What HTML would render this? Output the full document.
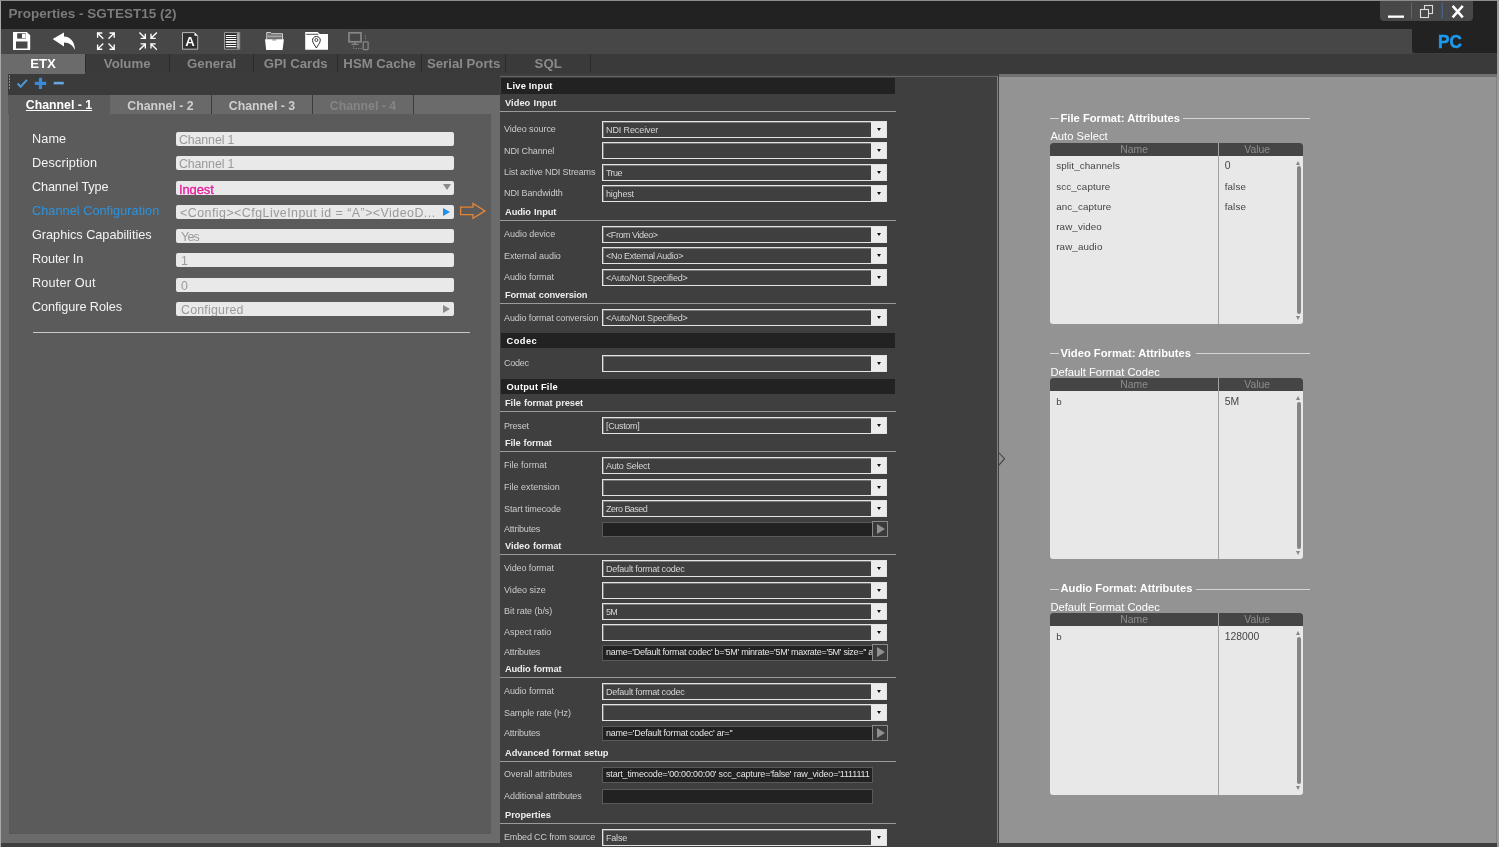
<!DOCTYPE html>
<html>
<head>
<meta charset="utf-8">
<title>Properties - SGTEST15 (2)</title>
<style>
*{box-sizing:border-box;margin:0;padding:0}
html,body{width:1499px;height:847px;overflow:hidden;background:#3e3e3e;font-family:"Liberation Sans",sans-serif;}
#root{will-change:transform;position:relative;width:1499px;height:847px;overflow:hidden;background:#3e3e3e;}
.abs{position:absolute}
.t{position:absolute;white-space:nowrap;line-height:1;}
/* ---------- frame ---------- */
#edgeL{left:0;top:0;width:1px;height:847px;background:#a9a9a9}
#edgeT{left:0;top:0;width:1499px;height:1px;background:#8c8c8c}
#edgeR{left:1496.5px;top:0;width:2.5px;height:847px;background:#9a9a9a}
#titlebar{left:1px;top:1px;width:1496px;height:28px;background:#222}
#title{left:8.5px;top:7px;font-size:13.5px;font-weight:bold;color:#7b7b7b;}
#toolbar{left:1px;top:29px;width:1411px;height:25px;background:#474747}
#pcbox{left:1412px;top:29px;width:85px;height:24px;background:#222;border-bottom-left-radius:4px}
#pc{left:1437.6px;top:31.9px;font-size:19px;font-weight:bold;color:#1b9bf0;transform:scaleX(0.905);transform-origin:0 0;-webkit-text-stroke:0.5px #1b9bf0}
#tabbar{left:1px;top:53.7px;width:1496px;height:20.3px;background:#3a3a3a}
#winbtn{left:1380px;top:1px;width:93px;height:19.6px;background:#484848;border-radius:0 0 4px 4px}
/* ---------- top tabs ---------- */
.tt{position:absolute;top:53px;height:21px;font-size:13.2px;font-weight:bold;color:#8a8a8a;text-align:center;line-height:21px;white-space:nowrap}
.tsep{position:absolute;top:54px;width:1px;height:18px;background:#2b2b2b}
#etx{left:1px;top:53.7px;width:84px;height:20.3px;line-height:20.4px;background:#6b6b6b;color:#fff}
/* ---------- left ---------- */
#etxpage{left:1px;top:74px;width:499px;height:769px;background:#6b6b6b}
#smalltb{left:8px;top:74px;width:492px;height:21.2px;background:#3b3b3b}
#chpanel{left:8.6px;top:95px;width:482.2px;height:739px;background:#5b5b5b;box-shadow:inset 1px -1px 0 #585858}
.ctab{position:absolute;top:95px;height:19px;background:#696969;font-size:12.3px;font-weight:bold;color:#cfcfcf;text-align:center;line-height:22.8px;white-space:nowrap}
.csep{position:absolute;top:95px;width:1px;height:19px;background:#3c3c3c}
.lbl{position:absolute;left:32px;font-size:12.7px;color:#f4f4f4;white-space:nowrap;line-height:16px}
.inp{position:absolute;left:176px;width:278px;height:14px;background:#e9e9e9;border-radius:2px;font-size:12.4px;color:#9a9a9a;line-height:17.4px;padding-left:3px;white-space:nowrap;overflow:hidden}
/* ---------- middle ---------- */
#mid{left:500px;top:74px;width:498px;height:773px;background:#3f3f3f}
.cat{position:absolute;left:501px;width:394px;height:15.8px;background:#222;color:#fff;font-size:9.3px;font-weight:bold;line-height:17.4px;margin-top:0.4px;padding-left:5.6px;white-space:nowrap}
.sec{position:absolute;left:505px;color:#ececec;font-size:9.3px;font-weight:bold;line-height:12px;white-space:nowrap;word-spacing:0.6px}
.ul{position:absolute;left:500px;width:396px;height:1px;background:#9a9a9a}
.pl{position:absolute;left:504px;color:#cbcbcb;font-size:9px;line-height:12px;white-space:nowrap;letter-spacing:-0.12px}
.dd{position:absolute;left:602px;width:285px;height:17px;border:1px solid #e4e4e4;background:#3f3f3f;color:#d6d6d6;font-size:9px;line-height:16.6px;padding-left:3px;white-space:nowrap;overflow:hidden;letter-spacing:-0.22px;box-shadow:inset 1px 1px 0 #777}
.dd:after{content:"";position:absolute;right:0;top:0;width:15px;height:15px;background:#ececec}
.dd:before{content:"";position:absolute;right:5px;top:6px;border-left:2.5px solid transparent;border-right:2.5px solid transparent;border-top:3px solid #111;z-index:2}
.tb{position:absolute;left:602px;width:271px;height:15.5px;border:1px solid #5a5a5a;background:#222;color:#e6e6e6;font-size:9px;line-height:12.6px;padding-left:3px;white-space:nowrap;overflow:hidden;letter-spacing:-0.3px}
.pb{position:absolute;left:871.5px;width:16.3px;height:16.3px;border:1px solid #8a8a8a;background:#3a3a3a}
.pb:after{content:"";position:absolute;left:4.5px;top:2px;border-top:5.2px solid transparent;border-bottom:5.2px solid transparent;border-left:8.5px solid #909090}
/* ---------- right ---------- */
#right{left:998.6px;top:74px;width:498.4px;height:769px;background:#939393}
.gl{position:absolute;height:1px;background:#d4d4d4}
.gt{position:absolute;left:1060.5px;font-size:11.2px;font-weight:bold;color:#fff;white-space:nowrap;line-height:12px}
.gs{position:absolute;left:1050.4px;font-size:11.2px;color:#fff;white-space:nowrap;line-height:12px}
.tbl{position:absolute;left:1050.2px;width:252.8px;height:181.3px;background:#e8e8e8;border-radius:3px;overflow:hidden}
.th{position:absolute;left:0;top:0;width:253px;height:13px;background:#454545}
.thn{position:absolute;top:0;height:13px;line-height:13px;font-size:10.4px;color:#8e8e8e;text-align:center}
.tc{position:absolute;font-size:9.8px;color:#454545;line-height:12px;white-space:nowrap;letter-spacing:0.12px}
.vsep{position:absolute;left:168px;top:0;width:1px;height:182px;background:#a2a2a2}
.sbar{position:absolute;left:247.2px;top:23.5px;width:3.6px;height:147.5px;background:#868686;border-radius:2px}
</style>
</head>
<body>
<div id="root">
<!-- FRAME -->
<div id="titlebar" class="abs"></div>
<div id="toolbar" class="abs"></div>
<div id="pcbox" class="abs"></div>
<div id="tabbar" class="abs"></div>
<div id="title" class="t">Properties - SGTEST15 (2)</div>
<div id="pc" class="t">PC</div>
<div id="winbtn" class="abs"></div>
<svg class="abs" style="left:1380px;top:1px" width="93" height="20" viewBox="0 0 93 20">
<rect x="8" y="14.5" width="16" height="2.3" fill="#fff"/>
<rect x="31" y="1.5" width="1" height="16" fill="#456c9e"/>
<rect x="61.7" y="1.5" width="1" height="16" fill="#456c9e"/>
<rect x="44.5" y="4.5" width="8" height="8" fill="none" stroke="#dcdcdc" stroke-width="1.1"/>
<rect x="40.5" y="8.5" width="8" height="8" fill="#484848" stroke="#dcdcdc" stroke-width="1.1"/>
<path d="M72.6 4.8 L82.8 16.4 M82.8 4.8 L72.6 16.4" stroke="#fff" stroke-width="2.5"/>
</svg>

<svg class="abs" style="left:0;top:29px" width="400" height="25" viewBox="0 0 400 25">
<!-- save: x13-30.5, y3-21 -->
<path d="M13 3 H26.8 L30.2 6.2 V21 H13 Z" fill="#fff"/>
<rect x="17.2" y="4.3" width="8.6" height="5.3" fill="#474747"/>
<rect x="22" y="4.9" width="3.6" height="4.2" fill="#fff"/>
<rect x="16" y="12.5" width="11.5" height="7" fill="#474747"/>
<!-- undo: x52.7-75 y3.4-21 -->
<path d="M52.7 10 L64 3.4 V7.6 C70.5 8 74.6 12.5 75 21 C72.5 16 69.5 13.6 64 13.4 V17.6 Z" fill="#fff"/>
<!-- expand: x96.7-115 -->
<g stroke="#fff" stroke-width="1.35" fill="none" stroke-linecap="square">
<path d="M97.6 4 L102.8 9.2 M97.6 8 V4 H101.6"/>
<path d="M114.2 4 L109 9.2 M110.2 4 H114.2 V8"/>
<path d="M97.6 20.2 L102.8 15 M97.6 16.2 V20.2 H101.6"/>
<path d="M114.2 20.2 L109 15 M110.2 20.2 H114.2 V16.2"/>
</g>
<!-- collapse: x138.8-157.4 -->
<g stroke="#fff" stroke-width="1.35" fill="none" stroke-linecap="square">
<path d="M139.9 3.9 L145.3 9.3 M141.3 9.3 H145.3 V5.3"/>
<path d="M156.4 3.9 L151 9.3 M155 9.3 H151 V5.3"/>
<path d="M139.9 20.3 L145.3 14.9 M141.3 14.9 H145.3 V18.9"/>
<path d="M156.4 20.3 L151 14.9 M155 14.9 H151 V18.9"/>
</g>
<!-- A doc: x182-198.2 y3.2-20.5 -->
<path d="M182.5 3.6 H194.5 L197.7 6.8 V20.2 H182.5 Z" fill="#2f2f2f" stroke="#b8b8b8" stroke-width="1"/>
<path d="M194.5 3.6 V6.8 H197.7 Z" fill="#fff"/>
<text x="190" y="16.7" font-family="Liberation Sans" font-weight="bold" font-size="13.2" fill="#fff" text-anchor="middle">A</text>
<!-- list doc: x224-240.2 -->
<path d="M224.5 3.6 H239.7 V20.2 H224.5 Z" fill="#2c2c2c" stroke="#9a9a9a" stroke-width="1"/>
<rect x="236.9" y="4.1" width="2.3" height="15.6" fill="#a4a4a4"/>
<g stroke="#fff" stroke-width="1.1"><path d="M225.8 6.5 H236.3 M225.8 8.5 H236.3 M225.8 10.5 H236.3 M225.8 15.5 H236.3 M225.8 17.6 H236.3"/><path d="M225.8 13 H236.3" stroke-width="1.7"/></g>
<!-- open folder: x265-284 -->
<path d="M266.7 10.5 V3.5 H270.6 L271.6 4.7 H282.5 V10.5" fill="#6f6f6f" stroke="#cfcfcf" stroke-width="1"/>
<rect x="267.6" y="6.6" width="14" height="1.6" fill="#a8a8a8"/>
<path d="M265 10.2 H283.9 L282.6 21 H266.2 Z" fill="#fff"/>
<rect x="272.2" y="10.2" width="4" height="1.3" fill="#9a9a9a"/>
<!-- folder with pin: x305-328.2 -->
<path d="M305.2 3 H317.6 L319.8 5 H328 V20.8 H305.2 Z" fill="#fff"/>
<path d="M306.2 5.3 H318.3" stroke="#3a3a3a" stroke-width="0.9"/>
<path d="M316.4 7.5 C313.7 7.5 312.5 9.5 312.5 11.2 C312.5 13.8 315.2 16.6 316.4 19 C317.6 16.6 320.3 13.8 320.3 11.2 C320.3 9.5 319.1 7.5 316.4 7.5 Z" fill="#fff" stroke="#2e2e2e" stroke-width="1"/>
<circle cx="316.4" cy="11" r="1.5" fill="#fff" stroke="#2e2e2e" stroke-width="0.9"/>
<!-- devices (disabled gray): x348-369.3 -->
<g fill="none" stroke="#878787">
<rect x="349" y="3.8" width="12" height="9" stroke-width="1.7"/>
<path d="M351.5 15.4 H358.5 M355 13 V15.4" stroke-width="1.4"/>
<rect x="363.2" y="12.8" width="4.9" height="7.8" rx="0.8" stroke-width="1.3"/>
<path d="M353.5 17 V19.6 H361.5" stroke-dasharray="1.2 1.2" stroke-width="1"/>
<path d="M365.5 6.5 V11.5" stroke-dasharray="1.2 1.2" stroke-width="1"/>
</g>
</svg>

<div id="etx" class="tt">ETX</div>
<div class="tt" style="left:85px;width:84.3px">Volume</div>
<div class="tt" style="left:169.5px;width:84.3px">General</div>
<div class="tt" style="left:253.5px;width:84.3px">GPI Cards</div>
<div class="tt" style="left:337.5px;width:84.3px">HSM Cache</div>
<div class="tt" style="left:421.5px;width:84.3px">Serial Ports</div>
<div class="tt" style="left:506px;width:84.3px">SQL</div>
<div class="tsep" style="left:85px"></div>
<div class="tsep" style="left:169px"></div>
<div class="tsep" style="left:253px"></div>
<div class="tsep" style="left:337px"></div>
<div class="tsep" style="left:421px"></div>
<div class="tsep" style="left:505px"></div>
<div class="tsep" style="left:590px"></div>

<div id="etxpage" class="abs"></div>
<div id="smalltb" class="abs"></div>
<div id="chpanel" class="abs"></div>
<div class="abs" style="left:414px;top:95px;width:86px;height:19px;background:#6b6b6b"></div>
<div class="ctab" style="left:8px;width:102px;background:#5b5b5b;color:#fff;text-decoration:underline;line-height:21.4px">Channel - 1</div>
<div class="ctab" style="left:110px;width:101px">Channel - 2</div>
<div class="ctab" style="left:212px;width:100px">Channel - 3</div>
<div class="ctab" style="left:313px;width:100px;color:#858585">Channel - 4</div>
<div class="csep" style="left:211px"></div>
<div class="csep" style="left:312px"></div>
<div class="csep" style="left:413px"></div>
<div class="lbl" style="top:130.5px;letter-spacing:0.106px">Name</div>
<div class="inp" style="top:132.0px;letter-spacing:-0.126px">Channel 1</div>
<div class="lbl" style="top:154.6px;letter-spacing:0.152px">Description</div>
<div class="inp" style="top:156.3px;letter-spacing:-0.126px">Channel 1</div>
<div class="lbl" style="top:178.7px;letter-spacing:-0.145px">Channel Type</div>
<div class="inp" style="top:180.6px;color:#e61aa0;font-size:13px;-webkit-text-stroke:0.3px #e61aa0;letter-spacing:-0.119px">Ingest</div>
<div class="lbl" style="top:202.8px;color:#2a93e0;letter-spacing:0.049px">Channel Configuration</div>
<div class="inp" style="top:204.9px;padding-left:4px;letter-spacing:0.478px">&lt;Config&gt;&lt;CfgLiveInput id = &#8220;A&#8221;&gt;&lt;VideoD...</div>
<div class="lbl" style="top:226.9px;letter-spacing:-0.014px">Graphics Capabilities</div>
<div class="inp" style="top:229.2px;padding-left:5px;letter-spacing:-0.743px">Yes</div>
<div class="lbl" style="top:251.0px;letter-spacing:-0.115px">Router In</div>
<div class="inp" style="top:253.4px;padding-left:5px">1</div>
<div class="lbl" style="top:275.1px;letter-spacing:0.168px">Router Out</div>
<div class="inp" style="top:277.7px;padding-left:5px">0</div>
<div class="lbl" style="top:299.2px;letter-spacing:-0.071px">Configure Roles</div>
<div class="inp" style="top:302.0px;padding-left:5px;letter-spacing:0.204px">Configured</div>
<div class="abs" style="left:443px;top:184.4px;border-left:4.1px solid transparent;border-right:4.1px solid transparent;border-top:6.8px solid #8a8a8a"></div>
<div class="abs" style="left:443px;top:207.9px;border-top:4px solid transparent;border-bottom:4px solid transparent;border-left:7px solid #1f8fe8"></div>
<div class="abs" style="left:443px;top:304.8px;border-top:4px solid transparent;border-bottom:4px solid transparent;border-left:7px solid #8a8a8a"></div>
<svg class="abs" style="left:458px;top:202px" width="30" height="19" viewBox="0 0 30 19"><path d="M2.6 5.2 H15 V1.5 L27 8.9 L15 16.3 V12.6 H2.6 Z" fill="none" stroke="#e38536" stroke-width="1.3" stroke-linejoin="miter"/></svg>
<div class="abs" style="left:33px;top:332px;width:437px;height:1px;background:#c9c9c9"></div>
<svg class="abs" style="left:8px;top:74px" width="70" height="21" viewBox="0 0 70 21">
<path d="M1.5 1.5v1M1.5 4.5v1M1.5 7.5v1M1.5 10.5v1M1.5 13.5v1" stroke="#e8e8e8" stroke-width="1"/>
<path d="M9.6 9.6 L12.6 12.7 L19 5.9" fill="none" stroke="#4c98d6" stroke-width="2.1"/>
<path d="M26.8 9.4 H38.2 M32.5 3.7 V15.1" stroke="#3a89d9" stroke-width="3.2"/>
<path d="M45.7 9.1 H55.8" stroke="#65a7de" stroke-width="2.6"/>
</svg>

<div id="mid" class="abs"></div>
<div class="abs" style="left:500px;top:76.2px;width:497px;height:1px;background:#646464"></div>
<div class="abs" style="left:997px;top:76.2px;width:1px;height:767px;background:#828282"></div>
<div class="cat" style="top:78px;letter-spacing:0.208px">Live Input</div>
<div class="sec" style="top:96.8px;letter-spacing:0.031px">Video Input</div><div class="ul" style="top:111.1px"></div>
<div class="pl" style="top:123.2px;letter-spacing:-0.048px">Video source</div><div class="dd" style="top:121.0px;letter-spacing:-0.109px">NDI Receiver</div>
<div class="pl" style="top:144.5px;letter-spacing:-0.121px">NDI Channel</div><div class="dd" style="top:142.3px"></div>
<div class="pl" style="top:165.9px;letter-spacing:-0.119px">List active NDI Streams</div><div class="dd" style="top:163.7px;letter-spacing:-0.568px">True</div>
<div class="pl" style="top:187.2px;letter-spacing:-0.110px">NDI Bandwidth</div><div class="dd" style="top:185.0px;letter-spacing:-0.160px">highest</div>
<div class="sec" style="top:206.3px;letter-spacing:-0.077px">Audio Input</div><div class="ul" style="top:219.9px"></div>
<div class="pl" style="top:228.3px;letter-spacing:-0.028px">Audio device</div><div class="dd" style="top:226.1px;letter-spacing:-0.439px">&lt;From Video&gt;</div>
<div class="pl" style="top:249.6px;letter-spacing:-0.053px">External audio</div><div class="dd" style="top:247.4px;letter-spacing:-0.287px">&lt;No External Audio&gt;</div>
<div class="pl" style="top:271.0px;letter-spacing:-0.102px">Audio format</div><div class="dd" style="top:268.8px;letter-spacing:-0.168px">&lt;Auto/Not Specified&gt;</div>
<div class="sec" style="top:289.4px;letter-spacing:-0.119px">Format conversion</div><div class="ul" style="top:303.0px"></div>
<div class="pl" style="top:311.5px;letter-spacing:-0.120px">Audio format conversion</div><div class="dd" style="top:309.3px;letter-spacing:-0.168px">&lt;Auto/Not Specified&gt;</div>
<div class="cat" style="top:332.3px;letter-spacing:0.416px">Codec</div>
<div class="pl" style="top:357.2px;letter-spacing:-0.263px">Codec</div><div class="dd" style="top:355.0px"></div>
<div class="cat" style="top:378.3px;letter-spacing:0.193px">Output File</div>
<div class="sec" style="top:397.3px;letter-spacing:-0.063px">File format preset</div><div class="ul" style="top:410.9px"></div>
<div class="pl" style="top:419.5px;letter-spacing:-0.219px">Preset</div><div class="dd" style="top:417.3px;letter-spacing:-0.339px">[Custom]</div>
<div class="sec" style="top:437.4px;letter-spacing:-0.122px">File format</div><div class="ul" style="top:451.0px"></div>
<div class="pl" style="top:459.3px;letter-spacing:0.017px">File format</div><div class="dd" style="top:457.1px;letter-spacing:-0.212px">Auto Select</div>
<div class="pl" style="top:481.2px;letter-spacing:0.019px">File extension</div><div class="dd" style="top:479.0px"></div>
<div class="pl" style="top:502.5px;letter-spacing:-0.088px">Start timecode</div><div class="dd" style="top:500.3px;letter-spacing:-0.523px">Zero Based</div>
<div class="pl" style="top:522.8px;letter-spacing:-0.192px">Attributes</div><div class="tb" style="top:521.8px"></div><div class="pb" style="top:521.0px"></div>
<div class="sec" style="top:540.3px;letter-spacing:-0.073px">Video format</div><div class="ul" style="top:553.9px"></div>
<div class="pl" style="top:562.4px;letter-spacing:-0.089px">Video format</div><div class="dd" style="top:560.2px;letter-spacing:-0.227px">Default format codec</div>
<div class="pl" style="top:583.7px;letter-spacing:0.034px">Video size</div><div class="dd" style="top:581.5px"></div>
<div class="pl" style="top:605.1px;letter-spacing:-0.058px">Bit rate (b/s)</div><div class="dd" style="top:602.9px;letter-spacing:-0.651px">5M</div>
<div class="pl" style="top:626.4px;letter-spacing:-0.027px">Aspect ratio</div><div class="dd" style="top:624.2px"></div>
<div class="pl" style="top:646.1px;letter-spacing:-0.192px">Attributes</div><div class="tb" style="top:645.1px;letter-spacing:-0.294px">name='Default format codec' b='5M' minrate='5M' maxrate='5M' size='' a</div><div class="pb" style="top:644.3px"></div>
<div class="sec" style="top:663.2px;letter-spacing:-0.172px">Audio format</div><div class="ul" style="top:676.8px"></div>
<div class="pl" style="top:685.3px;letter-spacing:-0.102px">Audio format</div><div class="dd" style="top:683.1px;letter-spacing:-0.227px">Default format codec</div>
<div class="pl" style="top:706.6px;letter-spacing:-0.076px">Sample rate (Hz)</div><div class="dd" style="top:704.4px"></div>
<div class="pl" style="top:726.9px;letter-spacing:-0.192px">Attributes</div><div class="tb" style="top:725.9px;letter-spacing:-0.213px">name='Default format codec' ar=''</div><div class="pb" style="top:725.1px"></div>
<div class="sec" style="top:747.0px;letter-spacing:-0.050px">Advanced format setup</div><div class="ul" style="top:760.6px"></div>
<div class="pl" style="top:768.4px;letter-spacing:0.010px">Overall attributes</div><div class="tb" style="top:767.4px;letter-spacing:-0.179px">start_timecode='00:00:00:00' scc_capture='false' raw_video='1111111</div>
<div class="pl" style="top:789.7px;letter-spacing:-0.064px">Additional attributes</div><div class="tb" style="top:788.7px"></div>
<div class="sec" style="top:808.8px;letter-spacing:-0.020px">Properties</div><div class="ul" style="top:823.1px"></div>
<div class="pl" style="top:831.1px;letter-spacing:-0.152px">Embed CC from source</div><div class="dd" style="top:828.9px;letter-spacing:-0.202px">False</div>

<div id="right" class="abs"></div>
<div class="abs" style="left:998.6px;top:74px;width:498.4px;height:3px;background:#707070"></div>
<div class="abs" style="left:1495.6px;top:77px;width:1px;height:766px;background:#818181"></div>
<svg class="abs" style="left:997px;top:450px" width="10" height="18" viewBox="0 0 10 18"><path d="M1.2 2.2 L7.6 8.7 L1.2 15.8" fill="none" stroke="#454545" stroke-width="1.1"/></svg>
<div class="gl" style="left:1050px;top:118.0px;width:8.7px"></div><div class="gl" style="left:1183px;top:118.0px;width:127px"></div><div class="gt" style="top:111.7px">File Format: Attributes</div><div class="gs" style="top:130.3px">Auto Select</div>
<div class="tbl" style="top:142.7px"><div class="th"></div><div class="thn" style="left:0;width:168px">Name</div><div class="thn" style="left:169px;width:76px">Value</div><div class="vsep"></div><div class="tc" style="left:6px;top:17.8px">split_channels</div><div class="tc" style="left:174.5px;top:17.8px;font-size:10.4px;letter-spacing:0">0</div><div class="tc" style="left:6px;top:37.9px">scc_capture</div><div class="tc" style="left:174.5px;top:37.9px">false</div><div class="tc" style="left:6px;top:57.9px">anc_capture</div><div class="tc" style="left:174.5px;top:57.9px">false</div><div class="tc" style="left:6px;top:78.0px">raw_video</div><div class="tc" style="left:174.5px;top:78.0px"></div><div class="tc" style="left:6px;top:98.1px">raw_audio</div><div class="tc" style="left:174.5px;top:98.1px"></div><div class="sbar"></div><div class="abs" style="left:246.2px;top:18px;border-left:2.8px solid transparent;border-right:2.8px solid transparent;border-bottom:4px solid #868686"></div><div class="abs" style="left:246.2px;top:173.2px;border-left:2.8px solid transparent;border-right:2.8px solid transparent;border-top:4px solid #868686"></div></div>
<div class="gl" style="left:1050px;top:353.3px;width:8.7px"></div><div class="gl" style="left:1196px;top:353.3px;width:114px"></div><div class="gt" style="top:347.0px">Video Format: Attributes</div><div class="gs" style="top:365.6px">Default Format Codec</div>
<div class="tbl" style="top:378.0px"><div class="th"></div><div class="thn" style="left:0;width:168px">Name</div><div class="thn" style="left:169px;width:76px">Value</div><div class="vsep"></div><div class="tc" style="left:6px;top:17.8px">b</div><div class="tc" style="left:174.5px;top:17.8px;font-size:10.4px;letter-spacing:0">5M</div><div class="sbar"></div><div class="abs" style="left:246.2px;top:18px;border-left:2.8px solid transparent;border-right:2.8px solid transparent;border-bottom:4px solid #868686"></div><div class="abs" style="left:246.2px;top:173.2px;border-left:2.8px solid transparent;border-right:2.8px solid transparent;border-top:4px solid #868686"></div></div>
<div class="gl" style="left:1050px;top:588.6px;width:8.7px"></div><div class="gl" style="left:1196px;top:588.6px;width:114px"></div><div class="gt" style="top:582.3px">Audio Format: Attributes</div><div class="gs" style="top:600.9px">Default Format Codec</div>
<div class="tbl" style="top:613.3px"><div class="th"></div><div class="thn" style="left:0;width:168px">Name</div><div class="thn" style="left:169px;width:76px">Value</div><div class="vsep"></div><div class="tc" style="left:6px;top:17.8px">b</div><div class="tc" style="left:174.5px;top:17.8px;font-size:10.4px;letter-spacing:0">128000</div><div class="sbar"></div><div class="abs" style="left:246.2px;top:18px;border-left:2.8px solid transparent;border-right:2.8px solid transparent;border-bottom:4px solid #868686"></div><div class="abs" style="left:246.2px;top:173.2px;border-left:2.8px solid transparent;border-right:2.8px solid transparent;border-top:4px solid #868686"></div></div>

<div id="edgeL" class="abs"></div>
<div id="edgeT" class="abs"></div>
<div id="edgeR" class="abs"></div>
</div>
</body>
</html>
